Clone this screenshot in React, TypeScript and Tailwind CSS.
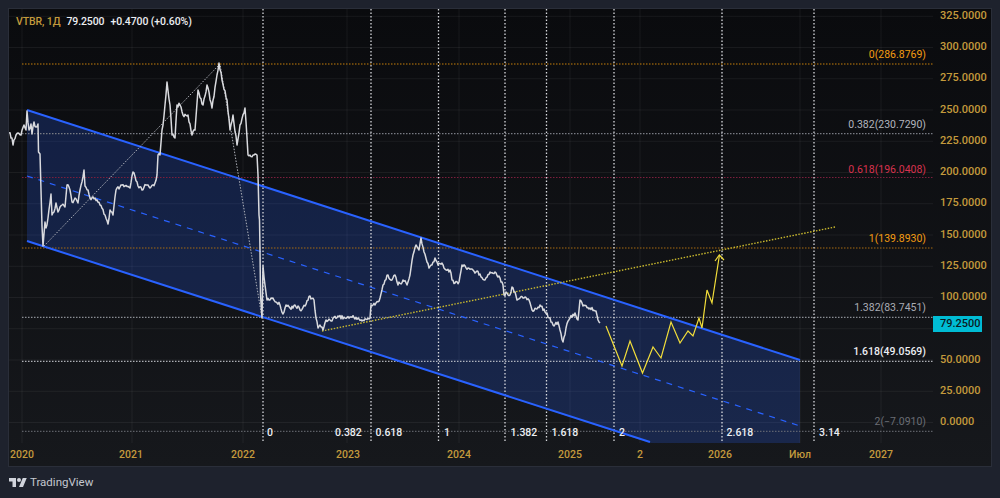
import React from 'react';

const font = "font-['Roboto',sans-serif]";

// rough trace of the close price, x/y in page pixels
const pricePoints: [number, number][] = [
  [9, 133], [12, 138], [13, 145], [16, 135], [18, 133], [21, 135], [24, 125], [26, 130], [27, 111], [29, 130], [31, 124], [32, 134],
  [34, 122], [36, 127], [38, 124], [38.5, 152], [40, 154], [41, 190], [42, 226], [43, 246], [45, 222], [46, 228], [48, 218], [51, 194],
  [52, 215], [54, 212], [56, 203], [58, 212], [60, 207], [62, 205], [65, 207], [67, 185], [70, 190], [72, 202], [75, 198], [78, 203],
  [80, 190], [84, 170], [85, 186], [88, 190], [90, 198], [95, 198], [100, 205], [105, 215], [108, 224], [110, 210], [113, 215], [116, 190],
  [120, 187], [125, 186], [130, 188], [133, 172], [138, 186], [142, 190], [146, 185], [150, 188], [155, 183], [157, 175], [158, 155],
  [160, 155], [162, 130], [163, 125], [165, 105], [167, 82], [170, 105], [172, 135], [175, 138], [177, 105], [180, 105], [183, 115],
  [188, 115], [192, 135], [195, 130], [198, 90], [203, 105], [207, 85], [212, 108], [217, 75], [219, 63], [222, 80], [227, 100], [230, 130],
  [233, 115], [237, 145], [240, 125], [245, 108], [248, 155], [253, 155], [257, 155], [258, 175], [259, 215], [259.5, 220], [260, 250],
  [260.5, 295], [262, 318], [263, 266], [265, 285], [267, 300], [270, 300], [273, 298], [276, 302], [280, 305], [283, 314], [286, 305],
  [290, 308], [295, 305], [300, 310], [305, 306], [310, 296], [314, 300], [316, 318], [318, 328], [320, 325], [323, 330], [326, 320],
  [330, 320], [338, 316], [345, 318], [350, 317], [358, 318], [362, 321], [370, 318], [371, 305], [375, 305], [380, 298], [383, 285],
  [388, 275], [392, 280], [395, 275], [398, 285], [403, 280], [407, 285], [410, 275], [413, 255], [416, 245], [419, 250], [421, 238],
  [424, 252], [427, 262], [429, 268], [432, 265], [435, 258], [438, 265], [442, 263], [446, 270], [450, 270], [452, 280], [455, 283],
  [459, 282], [462, 265], [468, 268], [473, 270], [476, 272], [480, 274], [485, 280], [490, 272], [495, 272], [500, 278], [503, 285],
  [504, 295], [506, 292], [510, 295], [512, 287], [515, 292], [517, 300], [520, 298], [525, 297], [529, 300], [532, 310], [537, 309],
  [540, 305], [545, 312], [550, 318], [553, 325], [558, 322], [560, 330], [563, 342], [566, 328], [570, 318], [575, 313], [578, 320],
  [580, 300], [583, 306], [590, 308], [596, 311], [598, 320], [600, 323],
];

// daily noise between the traced points
const noise = (i: number) => {
  const s = Math.sin(i * 12.9898) * 43758.5453;
  return (s - Math.floor(s)) * 2 - 1;
};

const pricePath = (() => {
  const out: string[] = [];
  let n = 0;
  pricePoints.forEach(([x, y], i) => {
    out.push(`${x},${y}`);
    const next = pricePoints[i + 1];
    if (!next) return;
    const steps = Math.floor((next[0] - x) / 0.9);
    for (let k = 1; k < steps; k++) {
      const t = k / steps;
      out.push(`${(x + (next[0] - x) * t).toFixed(1)},${(y + (next[1] - y) * t + noise(n++) * 2).toFixed(1)}`);
    }
  });
  return out.join(' ');
})();

const prices = [325, 300, 275, 250, 225, 200, 175, 150, 125, 100, 75, 50, 25, 0];
const priceY = (p: number) => 422.5 - 1.25 * p;

const gridX = [22, 132, 243, 347, 459, 570, 640, 722, 800, 881];
const fibTimeX = [263, 371, 438.5, 505, 546.5, 614, 722, 814];

const fibLevels = [
  { y: 64, stroke: '#c67f0a', width: 1 },
  { y: 133.7, stroke: '#787b83', width: 1.2 },
  { y: 177.5, stroke: '#7c1f3c', width: 1.2 },
  { y: 248, stroke: '#a66a10', width: 1.2 },
  { y: 317.3, stroke: '#a9acb4', width: 1 },
  { y: 361.3, stroke: '#d4d6db', width: 1 },
  { y: 431.3, stroke: '#6f7278', width: 1 },
];

const fibLabels = [
  { text: '0(286.8769)', cls: 'top-[39px] text-[#f39c12]' },
  { text: '0.382(230.7290)', cls: 'top-[109px] text-[#b2b5be]' },
  { text: '0.618(196.0408)', cls: 'top-[154px] text-[#d8324e]' },
  { text: '1(139.8930)', cls: 'top-[223px] text-[#f39c12]' },
  { text: '1.382(83.7451)', cls: 'top-[292px] text-[#a9acb4]' },
  { text: '1.618(49.0569)', cls: 'top-[336px] text-[#eceef2] font-medium' },
  { text: '2(−7.0910)', cls: 'top-[406px] text-[#6a6d74]' },
];

const fibTimeLabels = [
  { text: '0', cls: 'left-[258px]' },
  { text: '0.382', cls: 'left-[326px]' },
  { text: '0.618', cls: 'left-[366.5px]' },
  { text: '1', cls: 'left-[435px]' },
  { text: '1.382', cls: 'left-[501.5px]' },
  { text: '1.618', cls: 'left-[542.5px]' },
  { text: '2', cls: 'left-[610px]' },
  { text: '2.618', cls: 'left-[717.5px]' },
  { text: '3.14', cls: 'left-[810px]' },
];

const timeLabels = [
  { text: '2020', cls: 'ml-[-7px]' },
  { text: '2021', cls: 'ml-[69px]' },
  { text: '2022', cls: 'ml-[72px]' },
  { text: '2023', cls: 'ml-[65px]' },
  { text: '2024', cls: 'ml-[71px]' },
  { text: '2025', cls: 'ml-[71px]' },
  { text: '2', cls: 'ml-[30px]' },
  { text: '2026', cls: 'ml-[40px]' },
  { text: 'Июл', cls: 'ml-[40px]' },
  { text: '2027', cls: 'ml-[41px]' },
];

const ChartDrawing: React.FC = () => (
  <svg viewBox="9 9 924 434" className="block w-[924px] h-[434px]" fill="none">
    {prices.map(p => (
      <line key={p} x1="9" x2="933" y1={priceY(p)} y2={priceY(p)} stroke="#ffffff" strokeOpacity="0.06" />
    ))}
    {gridX.map(x => (
      <line key={x} x1={x} x2={x} y1="9" y2="443" stroke="#ffffff" strokeOpacity="0.06" />
    ))}

    {/* regression channel */}
    <polygon points="27,110 800,360 800,443 650,443 27,241" fill="#2962ff" fillOpacity="0.21" />

    {fibLevels.map(l => (
      <line key={l.y} x1="22" x2="933" y1={l.y} y2={l.y} stroke={l.stroke} strokeWidth={l.width} strokeDasharray="1.5 1.5" />
    ))}
    {fibTimeX.map(x => (
      <line key={x} x1={x} x2={x} y1="9" y2="443" stroke="#d6d8dc" strokeWidth="1.3" strokeDasharray="1.5 2" />
    ))}

    <line x1="27" y1="110" x2="800" y2="360" stroke="#2962ff" strokeWidth="2" />
    <line x1="27" y1="241" x2="650" y2="442" stroke="#2962ff" strokeWidth="2" />
    <line x1="27" y1="176" x2="800" y2="426" stroke="#2962ff" strokeWidth="1.2" strokeDasharray="6 6" />

    {/* trend lines */}
    <polyline points="44,246 220,64 262,318" stroke="#b0b3bb" strokeWidth="1" strokeDasharray="1.5 1.5" />
    <line x1="322" y1="331" x2="835" y2="227" stroke="#c9b92e" strokeWidth="1.4" strokeDasharray="1.5 1.5" />

    <polyline points={pricePath} stroke="#d9dade" strokeWidth="1.5" strokeLinejoin="round" />

    {/* forecast path */}
    <polyline
      points="606,326 622,366 630,341 642.5,373 653,347 661,358 671,322 680,343 688,331 693,336 699,318 702,328 707,290 712,303 719.3,256"
      stroke="#f2de3a"
      strokeWidth="1.2"
    />
    <polyline points="715,261 719.3,255 724,260" stroke="#f2de3a" strokeWidth="1.2" />
  </svg>
);

const TvLogo: React.FC = () => (
  <svg viewBox="0 0 36 28" className="w-[18px] h-[14px]" fill="#d1d4dc">
    <path d="M14 22H7V11H0V4h14v18zM28 22h-8l7.5-18h8L28 22z" />
    <circle cx="20" cy="8" r="4" />
  </svg>
);

export default function App() {
  return (
    <div className={`w-[1000px] h-[498px] bg-[#1e222d] flex flex-col overflow-hidden ${font}`}>
      <div className="mt-2 ml-2 mr-2 h-[459px] border border-[#2a2e39] bg-gradient-to-b from-[#0a0b0e] to-[#16181c] flex flex-col">
        <div className="flex h-[434px]">
          <div className="relative w-[924px] h-[434px] overflow-hidden">
            <ChartDrawing />
            <div className="absolute left-[7px] top-[6px] flex gap-[6px] text-[10.5px] leading-[14px] font-medium tracking-[-0.1px] text-[#eceef2]">
              <span className="text-[#c39a3c]">VTBR, 1Д</span>
              <span>79.2500</span>
              <span>+0.4700 (+0.60%)</span>
            </div>
            {fibLabels.map(l => (
              <span key={l.text} className={`absolute right-[7px] text-[10.5px] leading-[14px] ${l.cls}`}>{l.text}</span>
            ))}
            {fibTimeLabels.map(l => (
              <span key={l.text} className={`absolute top-[417px] text-[10.5px] leading-[14px] font-medium text-[#eceef2] ${l.cls}`}>{l.text}</span>
            ))}
          </div>
          <div className="relative flex-1 overflow-hidden">
            <div className="mt-[-8.6px] pl-[7px] flex flex-col text-[11px] font-medium text-[#c39a3c]">
              {prices.map(p => (
                <div key={p} className="h-[31.25px] flex items-center">
                  {p === 75 ? '' : p.toFixed(4)}
                </div>
              ))}
            </div>
            <div className="absolute left-0 top-[307px] w-[49px] h-[16px] bg-[#00bcd4] pl-[7px] text-[11px] leading-[16px] font-medium text-[#0b1a1f]">
              79.2500
            </div>
          </div>
        </div>
        <div className="flex items-center h-[24px] text-[10.5px] font-medium text-[#c39a3c]">
          {timeLabels.map(t => (
            <span key={t.text} className={`w-[40px] shrink-0 text-center ${t.cls}`}>{t.text}</span>
          ))}
        </div>
      </div>
      <div className="flex-1 flex items-center gap-[3px] pl-[9px]">
        <TvLogo />
        <span className="text-[11.5px] text-[#c5c8d0]">TradingView</span>
      </div>
    </div>
  );
}
